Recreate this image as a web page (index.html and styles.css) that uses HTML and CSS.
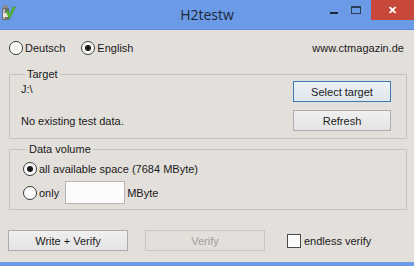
FILE: index.html
```html
<!DOCTYPE html>
<html lang="en">
<head>
    <meta charset="UTF-8">
    <meta name="viewport" content="width=device-width, initial-scale=1.0">
    <title>H2testw</title>
    <link rel="stylesheet" href="styles.css">
</head>
<body>
    <div class="window">
        <div class="titlebar">
            <div class="app-icon">
                <svg width="14" height="17" viewBox="0 0 14 17">
                    <rect x="1" y="1" width="5" height="3" fill="#8a8a8a"/>
                    <rect x="0" y="4" width="7" height="12" rx="1" fill="#6d6d6d"/>
                    <rect x="1" y="5" width="2" height="10" fill="#b9b9b9"/>
                    <rect x="1" y="9" width="5" height="4" fill="#e8e4d8"/>
                    <path d="M4 7 L7.5 15 L13.5 3 L11 3 L7.5 11 L6.5 7 Z" fill="#5cc030" stroke="#3a8a20" stroke-width="0.6"/>
                </svg>
            </div>
            <div class="title">H2testw</div>
            <div class="controls">
                <span class="ctl min"><span class="min-bar"></span></span>
                <span class="ctl max"><span class="max-box"></span></span>
                <span class="ctl close">&#x2715;</span>
            </div>
        </div>
        <div class="content">
            <div class="lang-row">
                <label class="radio"><span class="dot"></span>Deutsch</label>
                <label class="radio checked"><span class="dot"></span>English</label>
                <span class="site">www.ctmagazin.de</span>
            </div>
            <fieldset class="group target">
                <legend>Target</legend>
                <div class="target-grid">
                    <span class="path">J:\</span>
                    <button class="btn default">Select target</button>
                    <span>No existing test data.</span>
                    <button class="btn">Refresh</button>
                </div>
            </fieldset>
            <fieldset class="group volume">
                <legend>Data volume</legend>
                <label class="radio checked"><span class="dot"></span>all available space (7684 MByte)</label>
                <div class="only-row">
                    <label class="radio"><span class="dot"></span>only</label>
                    <input class="mbyte" type="text">
                    <span class="unit">MByte</span>
                </div>
            </fieldset>
            <div class="actions">
                <button class="btn wide">Write + Verify</button>
                <button class="btn wide" disabled>Verify</button>
                <label class="check"><span class="box"></span>endless verify</label>
            </div>
        </div>
    </div>
</body>
</html>
```

FILE: styles.css
```css
body {
    margin: 0;
    padding: 0;
    font-family: "Liberation Sans", Arial, sans-serif;
    font-size: 11px;
    color: #1a1a1a;
    background: #e3e0dc;
}
.window {
    width: 414px;
    height: 266px;
    display: flex;
    flex-direction: column;
    background: #e3e0dc;
    border-bottom: 4px solid #6b9be6;
    box-sizing: border-box;
}
.titlebar {
    height: 29px;
    flex-shrink: 0;
    background: #6b9be6;
    border-bottom: 1px solid #5f8fd8;
    display: grid;
    grid-template-columns: 1fr auto 1fr;
}
.app-icon { padding: 4px 0 0 2px; }
.title {
    font-family: "Open Sans", sans-serif;
    font-size: 14px;
    color: #1c2838;
    padding-top: 5px;
}
.controls { display: flex; justify-content: flex-end; align-items: flex-start; }
.ctl { display: flex; justify-content: center; }
.min { width: 23px; height: 20px; align-items: flex-end; }
.min-bar { width: 8px; height: 2px; background: #1c2838; margin-bottom: 6px; }
.max { width: 21px; height: 20px; align-items: flex-start; }
.max-box { width: 8px; height: 5px; border: 1px solid #2c3e58; border-top-width: 2px; margin-top: 6px; }
.close {
    width: 43px;
    height: 20px;
    margin-left: 5px;
    background: #c7483a;
    color: #fff;
    font-size: 11px;
    font-weight: bold;
    align-items: center;
}
.content { flex: 1; padding-top: 11px; }
.lang-row {
    display: flex;
    align-items: center;
    height: 14px;
    padding: 0 10px 0 9px;
}
.lang-row .radio { margin-right: 16px; }
.site { margin-left: auto; }
.radio, .check { display: inline-flex; align-items: center; height: 14px; }
.dot {
    width: 12px;
    height: 12px;
    border: 1px solid #3a3a3a;
    border-radius: 50%;
    background: #fdfdfd;
    margin-right: 2px;
    position: relative;
}
.checked .dot::after {
    content: "";
    position: absolute;
    left: 3px;
    top: 3px;
    width: 6px;
    height: 6px;
    border-radius: 50%;
    background: #1a1a1a;
}
.group {
    margin: 13px 7px 0 9px;
    border: 1px solid #c6c3bf;
    padding: 0 15px 7px 11px;
}
.group legend { padding: 0 2px; margin-left: 4px; line-height: 13px; }
.target-grid {
    display: grid;
    grid-template-columns: 1fr 98px;
    row-gap: 8px;
    align-items: center;
}
.path { align-self: start; padding-top: 2px; }
.btn {
    font-family: "Liberation Sans", Arial, sans-serif;
    font-size: 11px;
    color: #1a1a1a;
    height: 21px;
    border: 1px solid #acacac;
    background: linear-gradient(#f0f0f0, #e4e4e4);
    padding: 0;
}
.btn.default { border-color: #3d7ab3; background: linear-gradient(#ecf2f7, #dfe6ec); }
.btn:disabled { border-color: #c9c7c4; background: #e3e0dc; color: #a09e9b; }
.group.volume { margin-top: 4px; padding: 6px 10px 5px 13px; }
.only-row { display: flex; align-items: center; margin-top: 3px; }
.only-row .radio { margin-right: 6px; }
.unit { margin-left: 2px; }
.mbyte {
    width: 60px;
    height: 23px;
    box-sizing: border-box;
    border: 1px solid #b7b5b2;
    background: #fbfbfb;
    margin: 0;
    padding: 0;
}
.actions {
    display: flex;
    align-items: center;
    margin-top: 20px;
    padding-left: 8px;
}
.btn.wide { width: 120px; margin-right: 17px; }
.check { margin-left: 5px; }
.box {
    width: 12px;
    height: 12px;
    border: 1px solid #4a4a4a;
    background: #fbfbfb;
    margin-right: 3px;
}
```
